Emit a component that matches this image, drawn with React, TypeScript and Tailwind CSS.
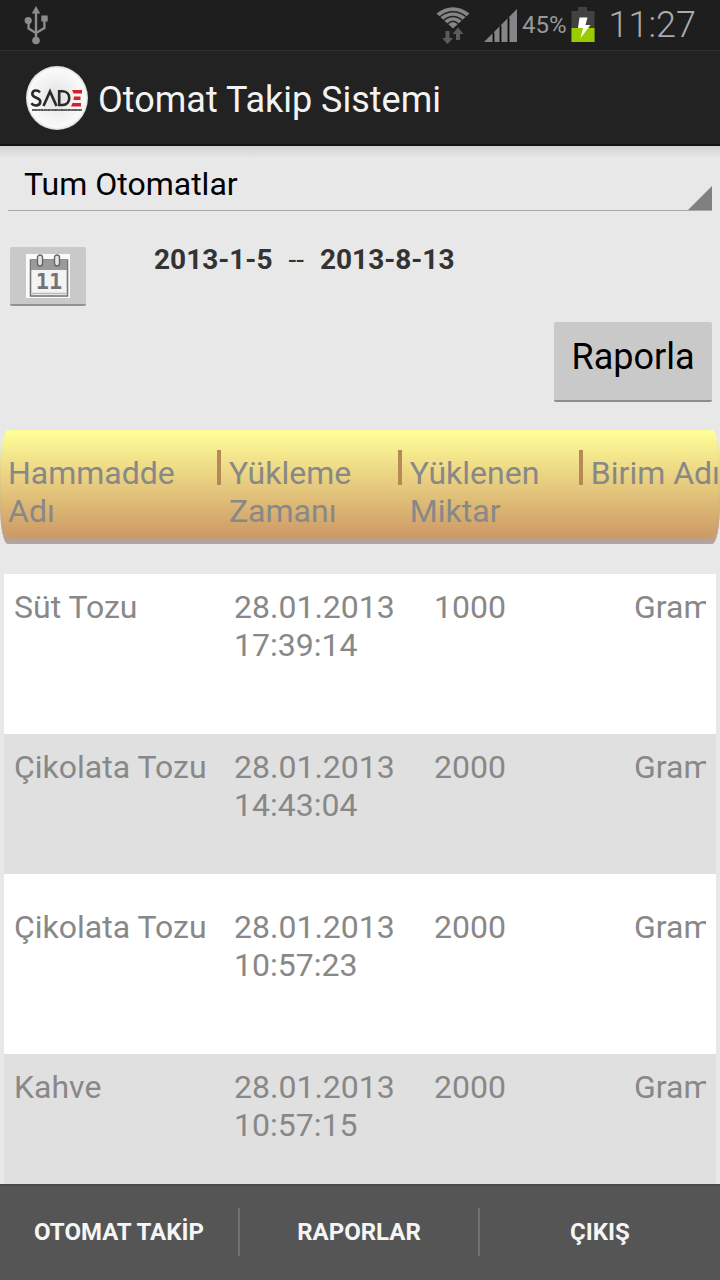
import React from "react";

type Entry = {
  material: string;
  date: string;
  time: string;
  amount: string;
  unit: string;
  rowClass: string;
};

const entries: Entry[] = [
  { material: "Süt Tozu", date: "28.01.2013", time: "17:39:14", amount: "1000", unit: "Gram", rowClass: "bg-white pt-3.5 h-40" },
  { material: "Çikolata Tozu", date: "28.01.2013", time: "14:43:04", amount: "2000", unit: "Gram", rowClass: "bg-[#e0e0e0] pt-3.5 h-35" },
  { material: "Çikolata Tozu", date: "28.01.2013", time: "10:57:23", amount: "2000", unit: "Gram", rowClass: "bg-white pt-8.5 h-45" },
  { material: "Kahve", date: "28.01.2013", time: "10:57:15", amount: "2000", unit: "Gram", rowClass: "bg-[#e0e0e0] pt-3.5 h-40" },
];

const columns = ["Hammadde Adı", "Yükleme Zamanı", "Yüklenen Miktar", "Birim Adı"];
const tabs = ["OTOMAT TAKİP", "RAPORLAR", "ÇIKIŞ"];

function UsbIcon() {
  return (
    <svg width="24" height="40" viewBox="0 0 24 40" fill="#8c8c8c" aria-hidden="true">
      <path d="M12 0l4.200 7.500h-8.400z" />
      <rect x="10.800" y="5" width="2.400" height="28" />
      <circle cx="12" cy="34.500" r="3.800" />
      <circle cx="4.200" cy="14.500" r="3.600" />
      <rect x="17.300" y="9.500" width="6.400" height="6" />
      <path d="M4.600 16v6.500l7.400 4.500M20.400 14v8l-8.400 5" fill="none" stroke="#8c8c8c" strokeWidth="2.400" />
    </svg>
  );
}

function WifiIcon() {
  return (
    <svg width="34" height="38" viewBox="0 0 34 38" aria-hidden="true">
      <path d="M.5 6.500Q17-6 33.500 6.500L17 21.500z" fill="#858585" />
      <g fill="none" stroke="#222" strokeWidth="1.300">
        <path d="M3.500 10Q17-.5 30.500 10" />
        <path d="M7.500 13.500Q17 5.500 26.500 13.500" />
        <path d="M11.500 17Q17 11.500 22.500 17" />
      </g>
      <path d="M9.500 24h4v7h3.500l-5.500 6-5.500-6h3.500zM20 33v-6h-3.500l5.500-6.500 5.500 6.500h-3.500v6z" fill="#5c5c5c" />
    </svg>
  );
}

function SignalIcon() {
  return (
    <svg width="34" height="34" viewBox="0 0 34 34" aria-hidden="true">
      <path d="M0 33L33 0v33z" fill="#858585" />
      <path d="M9.500 23.500V33M16.500 16.500V33M24.500 8.500V33" stroke="#0c0c0c" strokeWidth="1.800" />
    </svg>
  );
}

function BatteryIcon() {
  return (
    <svg width="24" height="36" viewBox="0 0 24 36" aria-hidden="true">
      <path d="M7 0h9v4h7.500v31H.5V4H7z" fill="#424242" />
      <path d="M.5 21h23v14H.5z" fill="#99cc00" />
      <path d="M8.500 10.500h8l-2 7.500h5L9.500 31l2.500-10H7z" fill="#fff" />
    </svg>
  );
}

function Logo() {
  return (
    <svg width="62" height="64" viewBox="0 0 62 64" role="img" aria-label="SADE">
      <defs>
        <radialGradient id="disc" cx="50%" cy="50%" r="50%">
          <stop offset="0" stopColor="#dedede" />
          <stop offset="0.550" stopColor="#f1f1f1" />
          <stop offset="0.920" stopColor="#fafafa" />
          <stop offset="1" stopColor="#d2d2d2" />
        </radialGradient>
      </defs>
      <ellipse cx="31" cy="32" rx="31" ry="32" fill="url(#disc)" />
      <g fill="none" stroke="#292929" strokeWidth="2.600">
        <path d="M14 26.300C11.500 23.600 6.300 23.800 6.300 28c0 4.500 8 3 8 7.500 0 4.800-6.500 5-9 1.700" />
        <path d="M17.500 40l6.500-14.500L30.500 40" />
        <path d="M33.200 25.200v13.800h3.300c9 0 9-13.800 0-13.800z" />
      </g>
      <path d="M46 24h10v3.500h-8.500zM48 30.500h6.500v3.500h-7zM46.500 37h8.500v3.500H45z" fill="#d4202c" />
      <path d="M6 44h50" stroke="#8a8a8a" strokeWidth="2" />
      <path d="M6 44h50" stroke="#444" strokeWidth="1.600" strokeDasharray="1.500 .7 2.500 .6 .8 .6" />
    </svg>
  );
}

function CalendarIcon() {
  return (
    <svg width="44" height="44" viewBox="0 0 44 44" aria-hidden="true">
      <rect width="44" height="44" fill="#fafafa" />
      <rect x="4.500" y="6" width="37" height="36" fill="#f3f3f3" stroke="#777" strokeWidth="1.600" />
      <rect x="5" y="6" width="36" height="10" fill="#9a9a9a" />
      <path d="M6 39.500h34" stroke="#bbb" strokeWidth="1.500" />
      <rect x="11.500" y="1" width="5" height="11" rx="2.500" fill="#e6e6e6" stroke="#666" strokeWidth="1.400" />
      <rect x="28.500" y="1" width="5" height="11" rx="2.500" fill="#e6e6e6" stroke="#666" strokeWidth="1.400" />
      <text x="23" y="35" textAnchor="middle" fontSize="22" fontWeight="700" fill="#737373" fontFamily="DejaVu Sans Mono, monospace">
        11
      </text>
    </svg>
  );
}

export default function App() {
  return (
    <div className="flex h-screen flex-col overflow-hidden bg-[#e8e8e8] font-['Roboto',sans-serif]">
      <div className="flex h-[50px] shrink-0 items-center bg-[#1e1e1e] px-6 text-[#999]">
        <span className="mt-0.5"><UsbIcon /></span>
        <div className="ml-auto flex items-center">
          <span className="mt-0.5"><WifiIcon /></span>
          <span className="ml-3.5 mt-0.5"><SignalIcon /></span>
          <span className="ml-1 text-2xl">45%</span>
          <span className="ml-1"><BatteryIcon /></span>
          <span className="ml-3.5 text-4xl font-light text-[#aaa]">11:27</span>
        </div>
      </div>

      <header className="flex h-24 shrink-0 items-center gap-2.5 border-t border-b-2 border-t-[#303030] border-b-[#111] bg-[#222] pl-6.5">
        <Logo />
        <h1 className="pt-1 text-4xl text-[#f3f3f3]">Otomat Takip Sistemi</h1>
      </header>

      <main className="flex min-h-0 flex-1 flex-col bg-linear-to-b from-[#d2d2d2] via-[#e8e8e8] via-[12px] to-[#e8e8e8]">
        <div className="relative mx-2 h-[65px] shrink-0 border-b border-[#a8a8a8]">
          <select
            aria-label="Otomat"
            className="h-full w-full appearance-none bg-transparent pb-1 pt-3.5 pl-4 text-[32px] text-black outline-none"
          >
            <option>Tum Otomatlar</option>
          </select>
          <svg className="pointer-events-none absolute right-0 bottom-0" width="24" height="24" viewBox="0 0 24 24" aria-hidden="true">
            <path d="M24 0v24H0z" fill="#808080" />
          </svg>
        </div>

        <div className="mt-9 flex shrink-0 items-start pl-2.5">
          <button
            type="button"
            aria-label="Tarih seç"
            className="flex h-[59px] w-19 items-center justify-center rounded-xs border-b-2 border-[#929292] bg-[#c9c9c9]"
          >
            <CalendarIcon />
          </button>
          <p className="ml-17 flex text-[28px] leading-[26px] text-[#333]">
            <b className="font-bold">2013-1-5</b>
            <span className="mx-4">--</span>
            <b className="font-bold">2013-8-13</b>
          </p>
        </div>

        <button
          type="button"
          className="mt-4 mr-2 h-20 w-39.5 shrink-0 self-end rounded-xs border-b-2 border-[#8c8c8c] bg-[#c9c9c9] pb-2 text-4xl text-black"
        >
          Raporla
        </button>

        <table className="mt-7 flex min-h-0 w-full flex-1 flex-col text-[32px] leading-[38px] text-[#888]">
          <thead className="block shrink-0">
            <tr className="grid h-[114px] grid-cols-[217fr_181fr_181fr_141fr] overflow-hidden rounded-[8px/40px] bg-linear-to-b from-[#ffff99] to-[#cc9966] to-95% pt-6 shadow-[inset_0_-6px_3px_-1px_#b0a5a5]">
              {columns.map((name, i) => (
                <th key={name} scope="col" className="flex items-start text-left font-normal">
                  {i > 0 && <span className="-mt-1 h-[35px] w-1 shrink-0 bg-[#b58a56]" />}
                  <span className={i === 3 ? "ml-2 whitespace-nowrap" : "ml-2"}>{name}</span>
                </th>
              ))}
            </tr>
          </thead>
          <tbody className="mx-1 mt-7.5 block min-h-0 flex-1 overflow-y-auto [scrollbar-width:none]">
            {entries.map((e) => (
              <tr key={e.date + e.time} className={`grid grid-cols-[220fr_200fr_200fr_92fr] items-start ${e.rowClass}`}>
                <td className="pl-2.5">{e.material}</td>
                <td className="pl-2.5">
                  {e.date}
                  <br />
                  {e.time}
                </td>
                <td className="pl-2.5">{e.amount}</td>
                <td className="mr-2.5 ml-2.5 min-w-0 overflow-hidden">{e.unit}</td>
              </tr>
            ))}
          </tbody>
        </table>
      </main>

      <nav className="grid h-24 shrink-0 grid-cols-3 items-center border-t-2 border-[#4a4a4a] bg-[#555] pb-0.5">
        {tabs.map((tab, i) => (
          <button
            key={tab}
            type="button"
            className={`h-12 text-2xl font-bold text-[#f5f5f5] ${i < 2 ? "border-r-2 border-[#707070]" : ""}`}
          >
            {tab}
          </button>
        ))}
      </nav>
    </div>
  );
}
